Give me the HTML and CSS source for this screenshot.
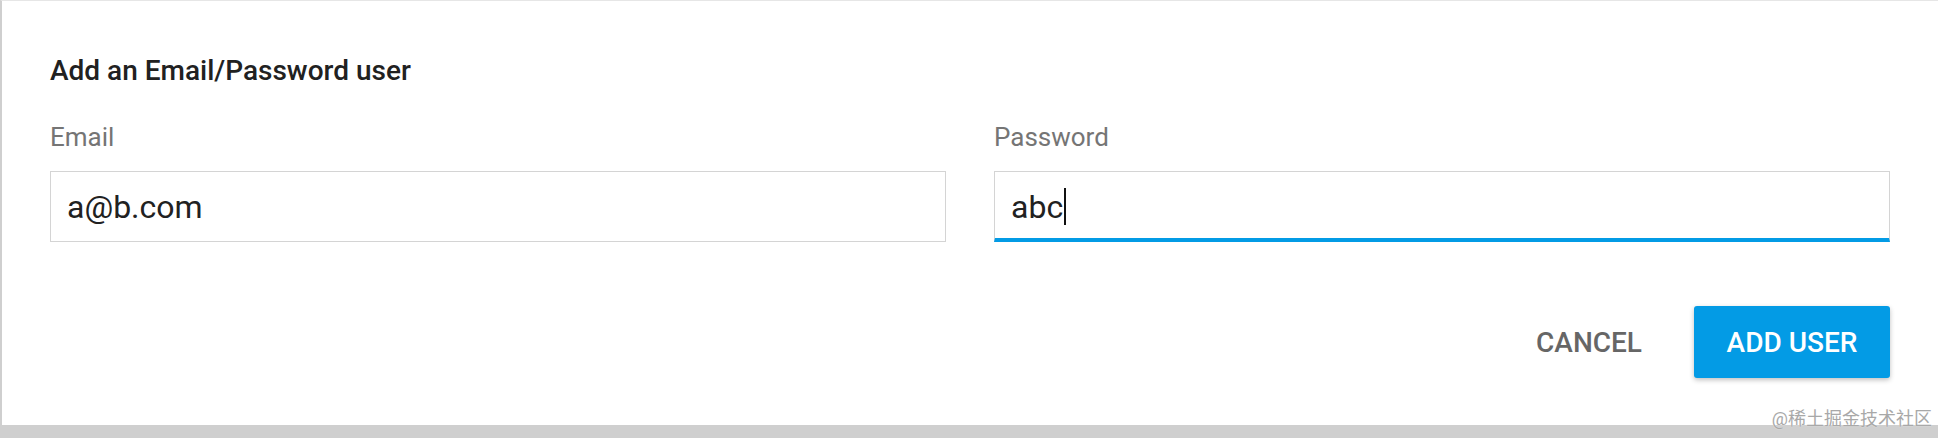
FILE: index.html
```html
<!DOCTYPE html>
<html lang="en">
<head>
    <meta charset="UTF-8">
    <meta name="viewport" content="width=device-width, initial-scale=1.0">
    <title>Add an Email/Password user</title>
    <link rel="stylesheet" href="styles.css">
</head>
<body>
<div class="dialog">
    <h2 class="dialog-title">Add an Email/Password user</h2>

    <div class="fields">
        <div class="field">
            <label class="field-label">Email</label>
            <div class="field-input">a@b.com</div>
        </div>
        <div class="field">
            <label class="field-label">Password</label>
            <div class="field-input focused">abc<span class="caret"></span></div>
        </div>
    </div>

    <div class="actions">
        <button class="btn btn-flat">Cancel</button>
        <button class="btn btn-primary">Add user</button>
    </div>
</div>
<div class="watermark">@稀土掘金技术社区</div>
</body>
</html>
```

FILE: styles.css
```css
body {
    margin: 0;
    height: 438px;
    background: #cfcfcf;
    font-family: Roboto, "Noto Sans CJK SC", sans-serif;
    position: relative;
    overflow: hidden;
}

.dialog {
    background: #fff;
    height: 425px;
    box-sizing: border-box;
    border-top: 1px solid #e6e6e6;
    border-left: 2px solid #cfcfcf;
    padding: 54px 48px 0 48px;
    display: flex;
    flex-direction: column;
}

.dialog-title {
    margin: 0;
    font-size: 28px;
    line-height: 32px;
    font-weight: 500;
    color: #212121;
}

.fields {
    display: grid;
    grid-template-columns: 1fr 1fr;
    gap: 48px;
    margin-top: 35px;
}

.field {
    display: flex;
    flex-direction: column;
}

.field-label {
    font-size: 26px;
    line-height: 30px;
    color: #757575;
    margin-bottom: 19px;
}

.field-input {
    height: 71px;
    box-sizing: border-box;
    border: 1px solid #d4d4d4;
    padding: 0 16px;
    font-size: 32px;
    color: #212121;
    display: flex;
    align-items: center;
}

.field-input.focused {
    border-bottom: 4px solid #039be5;
    padding-top: 3px;
}

.caret {
    display: inline-block;
    width: 2px;
    height: 37px;
    background: #111;
    margin-left: 1px;
}

.actions {
    display: flex;
    justify-content: flex-end;
    align-items: center;
    gap: 28px;
    margin-top: 64px;
}

.btn {
    font-family: Roboto, sans-serif;
    font-size: 28px;
    font-weight: 500;
    text-transform: uppercase;
    border: none;
    background: none;
    cursor: pointer;
    height: 72px;
    padding: 0 24px;
}

.btn-flat {
    color: #666;
}

.btn-primary {
    width: 196px;
    background: #039be5;
    color: #fff;
    border-radius: 3px;
    box-shadow: 0 2px 5px rgba(0, 0, 0, 0.25);
}

.watermark {
    position: absolute;
    right: 6px;
    bottom: 8px;
    font-size: 18px;
    color: #a8a8a8;
    text-shadow: 0 0 1px #fff;
}
```
